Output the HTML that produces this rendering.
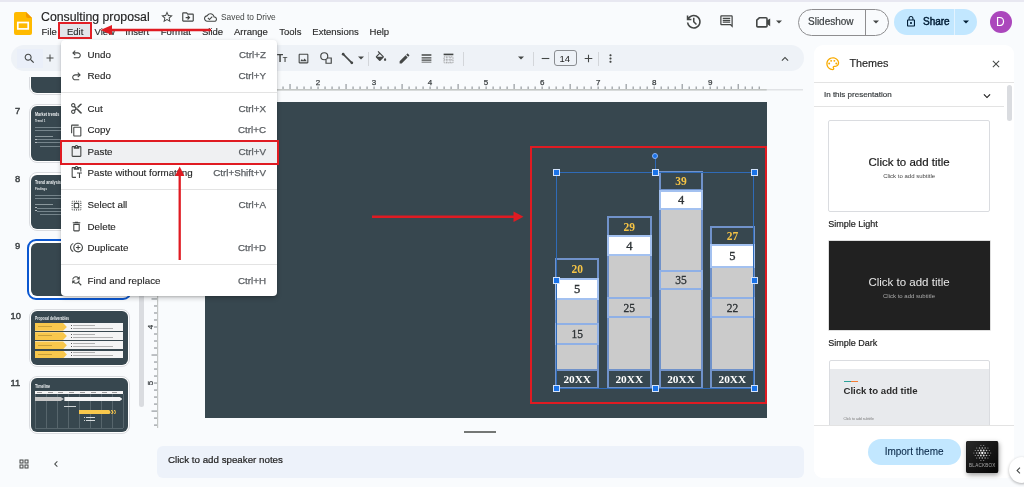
<!DOCTYPE html>
<html><head><meta charset="utf-8">
<style>
*{box-sizing:border-box;margin:0;padding:0}
html,body{width:1024px;height:487px;overflow:hidden;background:#f9fbfd;font-family:"Liberation Sans",sans-serif;color:#1f1f1f;position:relative}
.a{position:absolute}
svg{display:block}
.t{position:absolute;white-space:nowrap;line-height:1}
</style></head><body><div class="a" style="left:0;top:0;width:1024px;height:487px;will-change:transform;overflow:hidden">

<!-- filmstrip -->
<div class="a" style="left:0;top:76.8px;width:135px;height:30px;overflow:hidden"><div class="a" style="left:28.7px;top:-40.5px;width:101.5px;height:58.4px;border:1px solid #dadce0;border-radius:8px;background:#fff"></div><div class="a" style="left:30.9px;top:-38.5px;width:97px;height:54.5px;background:#37474f;border-radius:6px"></div></div>
<div class="a" style="left:28.7px;top:104.3px;width:101.5px;height:58.3px;border:1px solid #dadce0;border-radius:8px;background:#fff"></div>
<div class="a" style="left:30.9px;top:106.4px;width:97px;height:54.2px;background:#37474f;border-radius:6px;overflow:hidden"><div class="t" style="left:4px;top:4.8px;font-size:6px;font-weight:700;color:#eceff1;transform:scaleX(0.62);transform-origin:0 0">Market trends</div><div class="t" style="left:4px;top:13.5px;font-size:3.6px;font-weight:700;color:#dfe3e5;transform:scaleX(0.8);transform-origin:0 0">Trend 1</div><div class="a" style="left:4px;top:20.5px;width:40px;height:1px;background:#76858c"></div><div class="a" style="left:4px;top:23.6px;width:40px;height:1px;background:#76858c"></div><div class="a" style="left:4px;top:29.5px;width:18px;height:1px;background:#8a979c"></div><div class="a" style="left:6px;top:33.0px;width:40px;height:1px;background:#76858c"></div><div class="a" style="left:6px;top:36.1px;width:40px;height:1px;background:#76858c"></div><div class="a" style="left:9px;top:39.2px;width:37px;height:1px;background:#76858c"></div><div class="a" style="left:4.5px;top:32.7px;width:1.2px;height:1.2px;background:#c5cbce;border-radius:50%"></div><div class="a" style="left:4.5px;top:35.8px;width:1.2px;height:1.2px;background:#c5cbce;border-radius:50%"></div></div>
<div class="t" style="left:15.0px;top:106.2px;font-size:9.4px;color:#3c4043;-webkit-text-stroke:0.4px #3c4043">7</div>
<div class="a" style="left:28.7px;top:172.4px;width:101.5px;height:58.3px;border:1px solid #dadce0;border-radius:8px;background:#fff"></div>
<div class="a" style="left:30.9px;top:174.5px;width:97px;height:54.2px;background:#37474f;border-radius:6px;overflow:hidden"><div class="t" style="left:4px;top:4.8px;font-size:6px;font-weight:700;color:#eceff1;transform:scaleX(0.62);transform-origin:0 0">Trend analysis</div><div class="t" style="left:4px;top:13.5px;font-size:3.6px;font-weight:700;color:#dfe3e5;transform:scaleX(0.8);transform-origin:0 0">Findings</div><div class="a" style="left:4px;top:20.5px;width:40px;height:1px;background:#76858c"></div><div class="a" style="left:4px;top:23.6px;width:40px;height:1px;background:#76858c"></div><div class="a" style="left:4px;top:29.5px;width:18px;height:1px;background:#8a979c"></div><div class="a" style="left:6px;top:33.0px;width:40px;height:1px;background:#76858c"></div><div class="a" style="left:6px;top:36.1px;width:40px;height:1px;background:#76858c"></div><div class="a" style="left:9px;top:39.2px;width:37px;height:1px;background:#76858c"></div><div class="a" style="left:4.5px;top:32.7px;width:1.2px;height:1.2px;background:#c5cbce;border-radius:50%"></div><div class="a" style="left:4.5px;top:35.8px;width:1.2px;height:1.2px;background:#c5cbce;border-radius:50%"></div></div>
<div class="t" style="left:15.0px;top:174.3px;font-size:9.4px;color:#3c4043;-webkit-text-stroke:0.4px #3c4043">8</div>
<div class="a" style="left:27.1px;top:239.4px;width:104.5px;height:60.4px;border:2.3px solid #0b57d0;border-radius:9px;background:#fff"></div>
<div class="a" style="left:30.9px;top:242.8px;width:97px;height:53.7px;background:#37474f;border-radius:6px;overflow:hidden"></div>
<div class="t" style="left:15.0px;top:241.3px;font-size:9.4px;color:#3c4043;-webkit-text-stroke:0.4px #3c4043">9</div>
<div class="a" style="left:28.7px;top:308.6px;width:101.5px;height:58.3px;border:1px solid #dadce0;border-radius:8px;background:#fff"></div>
<div class="a" style="left:30.9px;top:310.7px;width:97px;height:54.2px;background:#37474f;border-radius:6px;overflow:hidden"><div class="t" style="left:4px;top:4.8px;font-size:6px;font-weight:700;color:#eceff1;transform:scaleX(0.55);transform-origin:0 0">Proposal deliverables</div><div class="a" style="left:4px;top:12.3px;width:88.5px;height:7.8px;background:#f4f4f4"></div><div class="a" style="left:4px;top:12.3px;width:32px;height:7.8px;background:#f8c74c;clip-path:polygon(0 0,88% 0,100% 50%,88% 100%,0 100%)"></div><div class="a" style="left:7px;top:15.5px;width:14px;height:1px;background:#c9a03a"></div><div class="a" style="left:40px;top:14.1px;width:1px;height:1px;background:#555"></div><div class="a" style="left:42.5px;top:14.1px;width:22px;height:0.8px;background:#b0b0b0"></div><div class="a" style="left:40px;top:17.1px;width:1px;height:1px;background:#555"></div><div class="a" style="left:42.5px;top:17.1px;width:40px;height:0.8px;background:#b0b0b0"></div><div class="a" style="left:4px;top:21.5px;width:88.5px;height:7.8px;background:#f4f4f4"></div><div class="a" style="left:4px;top:21.5px;width:32px;height:7.8px;background:#f8c74c;clip-path:polygon(0 0,88% 0,100% 50%,88% 100%,0 100%)"></div><div class="a" style="left:7px;top:24.7px;width:14px;height:1px;background:#c9a03a"></div><div class="a" style="left:40px;top:23.3px;width:1px;height:1px;background:#555"></div><div class="a" style="left:42.5px;top:23.3px;width:22px;height:0.8px;background:#b0b0b0"></div><div class="a" style="left:40px;top:26.3px;width:1px;height:1px;background:#555"></div><div class="a" style="left:42.5px;top:26.3px;width:40px;height:0.8px;background:#b0b0b0"></div><div class="a" style="left:4px;top:30.7px;width:88.5px;height:7.8px;background:#f4f4f4"></div><div class="a" style="left:4px;top:30.7px;width:32px;height:7.8px;background:#f8c74c;clip-path:polygon(0 0,88% 0,100% 50%,88% 100%,0 100%)"></div><div class="a" style="left:7px;top:33.9px;width:14px;height:1px;background:#c9a03a"></div><div class="a" style="left:40px;top:32.5px;width:1px;height:1px;background:#555"></div><div class="a" style="left:42.5px;top:32.5px;width:22px;height:0.8px;background:#b0b0b0"></div><div class="a" style="left:40px;top:35.5px;width:1px;height:1px;background:#555"></div><div class="a" style="left:42.5px;top:35.5px;width:40px;height:0.8px;background:#b0b0b0"></div><div class="a" style="left:4px;top:39.9px;width:88.5px;height:7.8px;background:#f4f4f4"></div><div class="a" style="left:4px;top:39.9px;width:32px;height:7.8px;background:#f8c74c;clip-path:polygon(0 0,88% 0,100% 50%,88% 100%,0 100%)"></div><div class="a" style="left:7px;top:43.1px;width:14px;height:1px;background:#c9a03a"></div><div class="a" style="left:40px;top:41.7px;width:1px;height:1px;background:#555"></div><div class="a" style="left:42.5px;top:41.7px;width:22px;height:0.8px;background:#b0b0b0"></div><div class="a" style="left:40px;top:44.7px;width:1px;height:1px;background:#555"></div><div class="a" style="left:42.5px;top:44.7px;width:40px;height:0.8px;background:#b0b0b0"></div></div>
<div class="t" style="left:10.5px;top:310.5px;font-size:9.4px;color:#3c4043;-webkit-text-stroke:0.4px #3c4043">10</div>
<div class="a" style="left:28.7px;top:376px;width:101.5px;height:58.3px;border:1px solid #dadce0;border-radius:8px;background:#fff"></div>
<div class="a" style="left:30.9px;top:378.1px;width:97px;height:54.2px;background:#37474f;border-radius:6px;overflow:hidden"><div class="t" style="left:4px;top:4.8px;font-size:6px;font-weight:700;color:#eceff1;transform:scaleX(0.62);transform-origin:0 0">Timeline</div><div class="a" style="left:4px;top:12.8px;width:88.5px;height:3.6px;background:#f4f4f4"></div><div class="a" style="left:6.0px;top:14px;width:5px;height:0.8px;background:#9a9a9a"></div><div class="a" style="left:16.8px;top:14px;width:5px;height:0.8px;background:#9a9a9a"></div><div class="a" style="left:27.6px;top:14px;width:5px;height:0.8px;background:#9a9a9a"></div><div class="a" style="left:38.4px;top:14px;width:5px;height:0.8px;background:#9a9a9a"></div><div class="a" style="left:49.2px;top:14px;width:5px;height:0.8px;background:#9a9a9a"></div><div class="a" style="left:60.0px;top:14px;width:5px;height:0.8px;background:#9a9a9a"></div><div class="a" style="left:70.8px;top:14px;width:5px;height:0.8px;background:#9a9a9a"></div><div class="a" style="left:81.6px;top:14px;width:5px;height:0.8px;background:#9a9a9a"></div><div class="a" style="left:4.0px;top:16.4px;width:0.6px;height:34px;background:#56656c"></div><div class="a" style="left:15.1px;top:16.4px;width:0.6px;height:34px;background:#56656c"></div><div class="a" style="left:26.1px;top:16.4px;width:0.6px;height:34px;background:#56656c"></div><div class="a" style="left:37.2px;top:16.4px;width:0.6px;height:34px;background:#56656c"></div><div class="a" style="left:48.2px;top:16.4px;width:0.6px;height:34px;background:#56656c"></div><div class="a" style="left:59.3px;top:16.4px;width:0.6px;height:34px;background:#56656c"></div><div class="a" style="left:70.4px;top:16.4px;width:0.6px;height:34px;background:#56656c"></div><div class="a" style="left:81.4px;top:16.4px;width:0.6px;height:34px;background:#56656c"></div><div class="a" style="left:92.5px;top:16.4px;width:0.6px;height:34px;background:#56656c"></div><div class="a" style="left:4px;top:50px;width:88.5px;height:0.6px;background:#56656c"></div><div class="a" style="left:4px;top:18.6px;width:29px;height:4.6px;background:#c8c8c8;clip-path:polygon(0 0,88% 0,100% 50%,88% 100%,0 100%)"></div><div class="a" style="left:33.5px;top:18.6px;width:58px;height:4.6px;background:#f4f4f4;clip-path:polygon(0 0,95% 0,100% 50%,95% 100%,0 100%)"></div><div class="a" style="left:33px;top:27.5px;width:12px;height:1px;background:#cfd4d6"></div><div class="a" style="left:48px;top:32px;width:37px;height:4.2px;background:#f8c74c;clip-path:polygon(0 0,82% 0,86% 50%,82% 100%,86% 100%,90% 50%,86% 0,90% 0,94% 50%,90% 100%,94% 100%,98% 50%,94% 0,98% 0,100% 50%,98% 100%,0 100%)"></div><div class="a" style="left:53px;top:38.6px;width:1.3px;height:1.3px;background:#fff;border-radius:50%"></div><div class="a" style="left:55.5px;top:38.8px;width:9px;height:1px;background:#d8dcde"></div><div class="a" style="left:53px;top:41.8px;width:1.3px;height:1.3px;background:#fff;border-radius:50%"></div><div class="a" style="left:55.5px;top:42px;width:9px;height:1px;background:#d8dcde"></div></div>
<div class="t" style="left:10.5px;top:377.9px;font-size:9.4px;color:#3c4043;-webkit-text-stroke:0.4px #3c4043">11</div>

<!-- top strip -->
<div class="a" style="left:0;top:0;width:1024px;height:2px;background:#e8e8f1"></div>

<!-- logo -->
<svg class="a" style="left:14px;top:12px" width="18" height="23" viewBox="0 0 18 23">
<path d="M2 0H12L18 6V21a2 2 0 0 1-2 2H2a2 2 0 0 1-2-2V2a2 2 0 0 1 2-2z" fill="#ffba00"/>
<path d="M12 0L18 6H14a2 2 0 0 1-2-2z" fill="#f29900"/>
<rect x="3.8" y="10.5" width="10.4" height="6.4" fill="none" stroke="#fff" stroke-width="1.7"/>
</svg>

<div class="t" style="left:41px;top:11px;font-size:12.3px;color:#1f1f1f;-webkit-text-stroke:0.15px #1f1f1f">Consulting proposal</div>

<!-- menubar -->
<div class="t" style="left:41.5px;top:27px;font-size:9.5px;color:#2b2b2b;-webkit-text-stroke:0.15px #2b2b2b">File</div>
<div class="a" style="left:59px;top:23px;width:31px;height:15px;background:#e3e5ea;border-radius:3px"></div>
<div class="t" style="left:67px;top:27px;font-size:9.5px;color:#2b2b2b;-webkit-text-stroke:0.15px #2b2b2b">Edit</div>
<div class="t" style="left:94.5px;top:27px;font-size:9.5px;color:#2b2b2b;-webkit-text-stroke:0.15px #2b2b2b">View</div>
<div class="t" style="left:125.3px;top:27px;font-size:9.5px;color:#2b2b2b;-webkit-text-stroke:0.15px #2b2b2b">Insert</div>
<div class="t" style="left:160.8px;top:27px;font-size:9.5px;color:#2b2b2b;-webkit-text-stroke:0.15px #2b2b2b">Format</div>
<div class="t" style="left:202px;top:27px;font-size:9.5px;color:#2b2b2b;-webkit-text-stroke:0.15px #2b2b2b">Slide</div>
<div class="t" style="left:234px;top:27px;font-size:9.5px;color:#2b2b2b;-webkit-text-stroke:0.15px #2b2b2b">Arrange</div>
<div class="t" style="left:279.3px;top:27px;font-size:9.5px;color:#2b2b2b;-webkit-text-stroke:0.15px #2b2b2b">Tools</div>
<div class="t" style="left:312.3px;top:27px;font-size:9.5px;color:#2b2b2b;-webkit-text-stroke:0.15px #2b2b2b">Extensions</div>
<div class="t" style="left:369.6px;top:27px;font-size:9.5px;color:#2b2b2b;-webkit-text-stroke:0.15px #2b2b2b">Help</div>

<!-- edit red box -->
<div class="a" style="left:57.5px;top:21.5px;width:34px;height:17.5px;border:2px solid #e21f26"></div>


<!-- title icons -->
<svg class="a" style="left:160px;top:10px" width="14" height="14" viewBox="0 0 24 24"><path fill="#444746" d="M22 9.24l-7.19-.62L12 2 9.19 8.63 2 9.24l5.46 4.73L5.82 21 12 17.27 18.18 21l-1.63-7.03L22 9.24zM12 15.4l-3.76 2.27 1-4.28-3.32-2.88 4.38-.38L12 6.1l1.71 4.04 4.38.38-3.32 2.88 1 4.28L12 15.4z"/></svg>
<svg class="a" style="left:181px;top:10px" width="14" height="14" viewBox="0 0 24 24"><path fill="#444746" d="M20 6h-8l-2-2H4c-1.1 0-1.99.9-1.99 2L2 18c0 1.1.9 2 2 2h16c1.1 0 2-.9 2-2V8c0-1.1-.9-2-2-2zm0 12H4V6h5.17l2 2H20v10zm-7.84-6H8v2h4.16l-1.59 1.59L11.99 17 16 13.01 11.99 9l-1.41 1.41L12.16 12z"/></svg>
<svg class="a" style="left:203.5px;top:11px" width="13" height="13" viewBox="0 0 24 24"><path fill="#444746" d="M19.35 10.04C18.67 6.59 15.64 4 12 4 9.11 4 6.6 5.640 5.35 8.04 2.34 8.36 0 10.91 0 14c0 3.31 2.69 6 6 6h13c2.76 0 5-2.24 5-5 0-2.64-2.05-4.780-4.65-4.96zM19 18H6c-2.21 0-4-1.79-4-4 0-2.05 1.53-3.76 3.56-3.97l1.07-.11.5-.95C8.08 7.14 9.94 6 12 6c2.62 0 4.88 1.86 5.39 4.43l.3 1.5 1.53.11c1.56.1 2.78 1.41 2.78 2.96 0 1.65-1.35 3-3 3zm-9-3.82l-2.09-2.09L6.5 13.5 10 17l6.01-6.01-1.41-1.41z"/></svg>
<div class="t" style="left:221px;top:13px;font-size:8.35px;color:#444746">Saved to Drive</div>

<!-- right header -->
<svg class="a" style="left:685.8px;top:14px" width="15.5" height="15.5" viewBox="80 -880 800 800"><path fill="#444746" d="M480-120q-138 0-240.5-91.5T122-440h82q14 104 92.5 172T480-200q117 0 198.5-81.5T760-480q0-117-81.5-198.5T480-760q-69 0-129 32t-101 88h110v80H120v-240h80v94q51-64 124.5-99T480-840q75 0 140.5 28.5t114 77q48.5 48.5 77 114T840-480q0 75-28.5 140.5t-77 114q-48.5 48.5-114 77T480-120Zm112-192L440-464v-216h80v184l128 128-56 56Z"/></svg>
<svg class="a" style="left:719px;top:14px" width="15" height="15" viewBox="0 0 24 24"><path fill="#444746" d="M21.99 4c0-1.1-.89-2-1.99-2H4c-1.1 0-2 .9-2 2v12c0 1.1.9 2 2 2h14l4 4-.01-18zM20 4v13.17L18.83 16H4V4h16zM6 12h12v2H6zm0-3h12v2H6zm0-3h12v2H6z"/></svg>
<svg class="a" style="left:754px;top:15px" width="18" height="14" viewBox="0 0 18 14"><path fill="none" stroke="#444746" stroke-width="1.6" stroke-linejoin="round" d="M2.8 5.2L5.3 2.8H12a1 1 0 0 1 1 1V10.9a1 1 0 0 1-1 1H3.8a1 1 0 0 1-1-1z"/><path fill="#444746" d="M13 5.6L16.2 3.4V11.3L13 9.1z"/></svg>
<svg class="a" style="left:775px;top:18px" width="8" height="8" viewBox="0 0 8 8"><path fill="#444746" d="M1 2.5h6L4 5.5z"/></svg>

<div class="a" style="left:797.5px;top:8.5px;width:91px;height:27px;border:1px solid #8e8e90;border-radius:14px"></div>
<div class="a" style="left:865px;top:9px;width:1px;height:26px;background:#8e8e90"></div>
<div class="t" style="left:808px;top:17px;font-size:10px;color:#3c4043;-webkit-text-stroke:0.2px #3c4043">Slideshow</div>
<svg class="a" style="left:871.5px;top:18px" width="8" height="8" viewBox="0 0 8 8"><path fill="#444746" d="M1 2.5h6L4 5.5z"/></svg>

<div class="a" style="left:894px;top:8.5px;width:83px;height:26.5px;background:#c2e7ff;border-radius:14px"></div>
<div class="a" style="left:954px;top:8.5px;width:1px;height:26.5px;background:#e3f3ff"></div>
<svg class="a" style="left:905px;top:15px" width="12" height="13" viewBox="0 0 24 26"><path fill="#001d35" d="M18 9h-1V7c0-2.76-2.24-5-5-5S7 4.24 7 7v2H6c-1.1 0-2 .9-2 2v10c0 1.1.9 2 2 2h12c1.1 0 2-.9 2-2V11c0-1.1-.9-2-2-2zM9.2 7c0-1.55 1.250-2.8 2.8-2.8s2.8 1.25 2.8 2.8v2H9.2V7zM17.8 20.8H6.2V11.2h11.6zM12 18c1.1 0 2-.9 2-2s-.9-2-2-2-2 .9-2 2 .9 2 2 2z"/></svg>
<div class="t" style="left:923px;top:17px;font-size:10px;color:#001d35;-webkit-text-stroke:0.45px #001d35">Share</div>
<svg class="a" style="left:962px;top:18px" width="8" height="8" viewBox="0 0 8 8"><path fill="#001d35" d="M1 2.5h6L4 5.5z"/></svg>

<div class="a" style="left:990px;top:10.8px;width:22px;height:22px;border-radius:50%;background:#ab47bc"></div>
<div class="t" style="left:996px;top:16px;font-size:12px;color:#fff">D</div>


<!-- toolbar -->
<div class="a" style="left:11px;top:45px;width:793px;height:26px;background:#eef2f7;border-radius:13px"></div>
<div class="a" style="left:16.5px;top:48.5px;width:26px;height:19.5px;background:#eaeff9"></div>
<svg class="a" style="left:22.5px;top:51.5px" width="13" height="13" viewBox="0 0 24 24"><path fill="#444746" d="M15.5 14h-.79l-.28-.27C15.41 12.59 16 11.110 16 9.5 16 5.91 13.09 3 9.5 3S3 5.91 3 9.5 5.91 16 9.5 16c1.61 0 3.09-.59 4.23-1.57l.27.28v.79l5 4.99L20.49 19l-4.99-5zm-6 0C7.01 14 5 11.99 5 9.5S7.01 5 9.5 5 14 7.01 14 9.5 11.99 14 9.5 14z"/></svg>
<svg class="a" style="left:44px;top:52px" width="12" height="12" viewBox="0 0 24 24"><path fill="#444746" d="M19 13h-6v6h-2v-6H5v-2h6V5h2v6h6v2z"/></svg>
<div class="t" style="left:277px;top:54px;font-size:10px;font-weight:700;color:#444746;letter-spacing:-0.3px">T<span style="font-size:7.5px">T</span></div>
<svg class="a" style="left:297px;top:52px" width="13" height="13" viewBox="0 0 24 24"><path fill="#444746" d="M19 5v14H5V5h14m0-2H5c-1.1 0-2 .9-2 2v14c0 1.1.9 2 2 2h14c1.1 0 2-.9 2-2V5c0-1.1-.9-2-2-2zm-4.86 8.86l-3 3.87L9 13.14 6 17h12l-3.86-5.14z"/></svg>
<svg class="a" style="left:319px;top:51px" width="14" height="14" viewBox="0 0 24 24"><circle cx="9" cy="9" r="6" fill="none" stroke="#444746" stroke-width="2"/><path d="M15.2 12H21v9h-9v-5.5" fill="none" stroke="#444746" stroke-width="2"/></svg>
<svg class="a" style="left:341px;top:52px" width="13" height="13" viewBox="0 0 24 24"><path d="M4 4L20 20" stroke="#444746" stroke-width="3"/><circle cx="4" cy="4" r="2.5" fill="#444746"/><circle cx="20" cy="20" r="2.5" fill="#444746"/></svg>
<svg class="a" style="left:357px;top:54px" width="8" height="8" viewBox="0 0 8 8"><path fill="#444746" d="M1 2.5h6L4 5.5z"/></svg>
<div class="a" style="left:368px;top:52px;width:1px;height:14px;background:#d3d6da"></div>
<svg class="a" style="left:374px;top:51px" width="14" height="14" viewBox="0 0 24 24"><path fill="#444746" d="M16.56 8.94L7.62 0 6.21 1.41l2.38 2.38-5.15 5.15c-.59.59-.59 1.54 0 2.12l5.5 5.5c.29.29.68.44 1.060.44s.77-.15 1.06-.44l5.5-5.5c.59-.58.59-1.53 0-2.12zM5.21 10L10 5.21 14.79 10H5.21zM19 11.5s-2 2.17-2 3.5c0 1.1.9 2 2 2s2-.9 2-2c0-1.33-2-3.5-2-3.5z"/></svg>
<svg class="a" style="left:398px;top:52px" width="13" height="13" viewBox="0 0 24 24"><path fill="#444746" d="M3 17.25V21h3.75L17.81 9.94l-3.75-3.75L3 17.25zM20.71 7.04c.39-.39.39-1.02 0-1.41l-2.34-2.34c-.39-.39-1.02-.39-1.41 0l-1.83 1.83 3.75 3.75 1.83-1.83z"/></svg>
<svg class="a" style="left:420px;top:52px" width="13" height="13" viewBox="0 0 24 24"><path fill="#444746" d="M3 4h18v3H3zM3 9.5h18v2.5H3zM3 14h18v2H3zM3 18h18v1.5H3z"/></svg>
<svg class="a" style="left:442px;top:52px" width="13" height="13" viewBox="0 0 24 24"><path fill="#444746" d="M3 3h18v3H3z"/><path fill="none" stroke="#8a8a8a" stroke-width="1.4" d="M3.7 9h16.6v11H3.7zM3.7 14.5h16.6M9 9v11M15 9v11" stroke-dasharray="2 1.2"/></svg>
<div class="a" style="left:463px;top:52px;width:1px;height:14px;background:#d3d6da"></div>
<svg class="a" style="left:517px;top:54px" width="8" height="8" viewBox="0 0 8 8"><path fill="#444746" d="M1 2.5h6L4 5.5z"/></svg>
<div class="a" style="left:533px;top:52px;width:1px;height:14px;background:#d3d6da"></div>
<svg class="a" style="left:539px;top:52px" width="13" height="13" viewBox="0 0 24 24"><path fill="#444746" d="M19 13H5v-2h14v2z"/></svg>
<div class="a" style="left:554px;top:50px;width:23px;height:16px;border:1px solid #8a8d91;border-radius:3px"></div>
<div class="t" style="left:559.5px;top:54px;font-size:9.5px;color:#1f1f1f">14</div>
<svg class="a" style="left:581.5px;top:52px" width="13" height="13" viewBox="0 0 24 24"><path fill="#444746" d="M19 13h-6v6h-2v-6H5v-2h6V5h2v6h6v2z"/></svg>
<div class="a" style="left:597.5px;top:52px;width:1px;height:14px;background:#d3d6da"></div>
<svg class="a" style="left:604px;top:52px" width="13" height="13" viewBox="0 0 24 24"><path fill="#444746" d="M12 8c1.1 0 2-.9 2-2s-.9-2-2-2-2 .9-2 2 .9 2 2 2zm0 2c-1.1 0-2 .9-2 2s.9 2 2 2 2-.9 2-2-.9-2-2-2zm0 6c-1.1 0-2 .9-2 2s.9 2 2 2 2-.9 2-2-.9-2-2-2z"/></svg>
<svg class="a" style="left:778px;top:51.5px" width="14" height="14" viewBox="0 0 24 24"><path fill="#444746" d="M12 8l-6 6 1.41 1.41L12 10.83l4.59 4.58L18 14z"/></svg>
<svg class="a" style="left:0;top:74px" width="1024" height="20" viewBox="0 74 1024 20">
<rect x="160" y="89" width="643" height="1.5" fill="#e1e3e6"/>
<rect x="205.3" y="89" width="561.4" height="1.5" fill="#c4c7c5"/>
<rect x="205.50" y="86.5" width="1" height="2.5" fill="#80868b"/><rect x="212.50" y="86.5" width="1" height="2.5" fill="#80868b"/><rect x="219.50" y="86.5" width="1" height="2.5" fill="#80868b"/><rect x="226.51" y="86.5" width="1" height="2.5" fill="#80868b"/><rect x="233.51" y="84" width="1" height="5" fill="#80868b"/><rect x="240.51" y="86.5" width="1" height="2.5" fill="#80868b"/><rect x="247.51" y="86.5" width="1" height="2.5" fill="#80868b"/><rect x="254.52" y="86.5" width="1" height="2.5" fill="#80868b"/><rect x="261.52" y="86.5" width="1" height="2.5" fill="#80868b"/><rect x="268.52" y="86.5" width="1" height="2.5" fill="#80868b"/><rect x="275.52" y="86.5" width="1" height="2.5" fill="#80868b"/><rect x="282.53" y="86.5" width="1" height="2.5" fill="#80868b"/><rect x="289.53" y="84" width="1" height="5" fill="#80868b"/><rect x="296.53" y="86.5" width="1" height="2.5" fill="#80868b"/><rect x="303.54" y="86.5" width="1" height="2.5" fill="#80868b"/><rect x="310.54" y="86.5" width="1" height="2.5" fill="#80868b"/><rect x="317.54" y="86.5" width="1" height="2.5" fill="#80868b"/><rect x="324.54" y="86.5" width="1" height="2.5" fill="#80868b"/><rect x="331.55" y="86.5" width="1" height="2.5" fill="#80868b"/><rect x="338.55" y="86.5" width="1" height="2.5" fill="#80868b"/><rect x="345.55" y="84" width="1" height="5" fill="#80868b"/><rect x="352.55" y="86.5" width="1" height="2.5" fill="#80868b"/><rect x="359.56" y="86.5" width="1" height="2.5" fill="#80868b"/><rect x="366.56" y="86.5" width="1" height="2.5" fill="#80868b"/><rect x="373.56" y="86.5" width="1" height="2.5" fill="#80868b"/><rect x="380.56" y="86.5" width="1" height="2.5" fill="#80868b"/><rect x="387.56" y="86.5" width="1" height="2.5" fill="#80868b"/><rect x="394.57" y="86.5" width="1" height="2.5" fill="#80868b"/><rect x="401.57" y="84" width="1" height="5" fill="#80868b"/><rect x="408.57" y="86.5" width="1" height="2.5" fill="#80868b"/><rect x="415.58" y="86.5" width="1" height="2.5" fill="#80868b"/><rect x="422.58" y="86.5" width="1" height="2.5" fill="#80868b"/><rect x="429.58" y="86.5" width="1" height="2.5" fill="#80868b"/><rect x="436.58" y="86.5" width="1" height="2.5" fill="#80868b"/><rect x="443.59" y="86.5" width="1" height="2.5" fill="#80868b"/><rect x="450.59" y="86.5" width="1" height="2.5" fill="#80868b"/><rect x="457.59" y="84" width="1" height="5" fill="#80868b"/><rect x="464.59" y="86.5" width="1" height="2.5" fill="#80868b"/><rect x="471.60" y="86.5" width="1" height="2.5" fill="#80868b"/><rect x="478.60" y="86.5" width="1" height="2.5" fill="#80868b"/><rect x="485.60" y="86.5" width="1" height="2.5" fill="#80868b"/><rect x="492.60" y="86.5" width="1" height="2.5" fill="#80868b"/><rect x="499.61" y="86.5" width="1" height="2.5" fill="#80868b"/><rect x="506.61" y="86.5" width="1" height="2.5" fill="#80868b"/><rect x="513.61" y="84" width="1" height="5" fill="#80868b"/><rect x="520.61" y="86.5" width="1" height="2.5" fill="#80868b"/><rect x="527.62" y="86.5" width="1" height="2.5" fill="#80868b"/><rect x="534.62" y="86.5" width="1" height="2.5" fill="#80868b"/><rect x="541.62" y="86.5" width="1" height="2.5" fill="#80868b"/><rect x="548.62" y="86.5" width="1" height="2.5" fill="#80868b"/><rect x="555.62" y="86.5" width="1" height="2.5" fill="#80868b"/><rect x="562.63" y="86.5" width="1" height="2.5" fill="#80868b"/><rect x="569.63" y="84" width="1" height="5" fill="#80868b"/><rect x="576.63" y="86.5" width="1" height="2.5" fill="#80868b"/><rect x="583.63" y="86.5" width="1" height="2.5" fill="#80868b"/><rect x="590.64" y="86.5" width="1" height="2.5" fill="#80868b"/><rect x="597.64" y="86.5" width="1" height="2.5" fill="#80868b"/><rect x="604.64" y="86.5" width="1" height="2.5" fill="#80868b"/><rect x="611.64" y="86.5" width="1" height="2.5" fill="#80868b"/><rect x="618.65" y="86.5" width="1" height="2.5" fill="#80868b"/><rect x="625.65" y="84" width="1" height="5" fill="#80868b"/><rect x="632.65" y="86.5" width="1" height="2.5" fill="#80868b"/><rect x="639.65" y="86.5" width="1" height="2.5" fill="#80868b"/><rect x="646.66" y="86.5" width="1" height="2.5" fill="#80868b"/><rect x="653.66" y="86.5" width="1" height="2.5" fill="#80868b"/><rect x="660.66" y="86.5" width="1" height="2.5" fill="#80868b"/><rect x="667.66" y="86.5" width="1" height="2.5" fill="#80868b"/><rect x="674.67" y="86.5" width="1" height="2.5" fill="#80868b"/><rect x="681.67" y="84" width="1" height="5" fill="#80868b"/><rect x="688.67" y="86.5" width="1" height="2.5" fill="#80868b"/><rect x="695.67" y="86.5" width="1" height="2.5" fill="#80868b"/><rect x="702.68" y="86.5" width="1" height="2.5" fill="#80868b"/><rect x="709.68" y="86.5" width="1" height="2.5" fill="#80868b"/><rect x="716.68" y="86.5" width="1" height="2.5" fill="#80868b"/><rect x="723.69" y="86.5" width="1" height="2.5" fill="#80868b"/><rect x="730.69" y="86.5" width="1" height="2.5" fill="#80868b"/><rect x="737.69" y="84" width="1" height="5" fill="#80868b"/><rect x="744.69" y="86.5" width="1" height="2.5" fill="#80868b"/><rect x="751.70" y="86.5" width="1" height="2.5" fill="#80868b"/><rect x="758.70" y="86.5" width="1" height="2.5" fill="#80868b"/>
<text x="262.02" y="85.2" font-family="Liberation Sans" font-size="8" fill="#3c4043" stroke="#3c4043" stroke-width="0.25" text-anchor="middle">1</text>
<text x="318.04" y="85.2" font-family="Liberation Sans" font-size="8" fill="#3c4043" stroke="#3c4043" stroke-width="0.25" text-anchor="middle">2</text>
<text x="374.06" y="85.2" font-family="Liberation Sans" font-size="8" fill="#3c4043" stroke="#3c4043" stroke-width="0.25" text-anchor="middle">3</text>
<text x="430.08" y="85.2" font-family="Liberation Sans" font-size="8" fill="#3c4043" stroke="#3c4043" stroke-width="0.25" text-anchor="middle">4</text>
<text x="486.10" y="85.2" font-family="Liberation Sans" font-size="8" fill="#3c4043" stroke="#3c4043" stroke-width="0.25" text-anchor="middle">5</text>
<text x="542.12" y="85.2" font-family="Liberation Sans" font-size="8" fill="#3c4043" stroke="#3c4043" stroke-width="0.25" text-anchor="middle">6</text>
<text x="598.14" y="85.2" font-family="Liberation Sans" font-size="8" fill="#3c4043" stroke="#3c4043" stroke-width="0.25" text-anchor="middle">7</text>
<text x="654.16" y="85.2" font-family="Liberation Sans" font-size="8" fill="#3c4043" stroke="#3c4043" stroke-width="0.25" text-anchor="middle">8</text>
<text x="710.18" y="85.2" font-family="Liberation Sans" font-size="8" fill="#3c4043" stroke="#3c4043" stroke-width="0.25" text-anchor="middle">9</text>
</svg>
<svg class="a" style="left:140px;top:90px" width="20" height="340" viewBox="140 90 20 340">
<rect x="157" y="92" width="1.2" height="336" fill="#c4c7c5"/>
<rect x="154" y="102.30" width="3" height="1" fill="#80868b"/>
<rect x="154" y="109.31" width="3" height="1" fill="#80868b"/>
<rect x="154" y="116.31" width="3" height="1" fill="#80868b"/>
<rect x="154" y="123.32" width="3" height="1" fill="#80868b"/>
<rect x="151.5" y="130.32" width="5.5" height="1" fill="#80868b"/>
<rect x="154" y="137.33" width="3" height="1" fill="#80868b"/>
<rect x="154" y="144.34" width="3" height="1" fill="#80868b"/>
<rect x="154" y="151.34" width="3" height="1" fill="#80868b"/>
<rect x="154" y="158.35" width="3" height="1" fill="#80868b"/>
<rect x="154" y="165.36" width="3" height="1" fill="#80868b"/>
<rect x="154" y="172.36" width="3" height="1" fill="#80868b"/>
<rect x="154" y="179.37" width="3" height="1" fill="#80868b"/>
<rect x="151.5" y="186.38" width="5.5" height="1" fill="#80868b"/>
<rect x="154" y="193.38" width="3" height="1" fill="#80868b"/>
<rect x="154" y="200.39" width="3" height="1" fill="#80868b"/>
<rect x="154" y="207.39" width="3" height="1" fill="#80868b"/>
<rect x="154" y="214.40" width="3" height="1" fill="#80868b"/>
<rect x="154" y="221.41" width="3" height="1" fill="#80868b"/>
<rect x="154" y="228.41" width="3" height="1" fill="#80868b"/>
<rect x="154" y="235.42" width="3" height="1" fill="#80868b"/>
<rect x="151.5" y="242.43" width="5.5" height="1" fill="#80868b"/>
<rect x="154" y="249.43" width="3" height="1" fill="#80868b"/>
<rect x="154" y="256.44" width="3" height="1" fill="#80868b"/>
<rect x="154" y="263.44" width="3" height="1" fill="#80868b"/>
<rect x="154" y="270.45" width="3" height="1" fill="#80868b"/>
<rect x="154" y="277.46" width="3" height="1" fill="#80868b"/>
<rect x="154" y="284.46" width="3" height="1" fill="#80868b"/>
<rect x="154" y="291.47" width="3" height="1" fill="#80868b"/>
<rect x="151.5" y="298.47" width="5.5" height="1" fill="#80868b"/>
<rect x="154" y="305.48" width="3" height="1" fill="#80868b"/>
<rect x="154" y="312.49" width="3" height="1" fill="#80868b"/>
<rect x="154" y="319.49" width="3" height="1" fill="#80868b"/>
<rect x="154" y="326.50" width="3" height="1" fill="#80868b"/>
<rect x="154" y="333.51" width="3" height="1" fill="#80868b"/>
<rect x="154" y="340.51" width="3" height="1" fill="#80868b"/>
<rect x="154" y="347.52" width="3" height="1" fill="#80868b"/>
<rect x="151.5" y="354.52" width="5.5" height="1" fill="#80868b"/>
<rect x="154" y="361.53" width="3" height="1" fill="#80868b"/>
<rect x="154" y="368.54" width="3" height="1" fill="#80868b"/>
<rect x="154" y="375.54" width="3" height="1" fill="#80868b"/>
<rect x="154" y="382.55" width="3" height="1" fill="#80868b"/>
<rect x="154" y="389.56" width="3" height="1" fill="#80868b"/>
<rect x="154" y="396.56" width="3" height="1" fill="#80868b"/>
<rect x="154" y="403.57" width="3" height="1" fill="#80868b"/>
<rect x="151.5" y="410.57" width="5.5" height="1" fill="#80868b"/>
<rect x="154" y="417.58" width="3" height="1" fill="#80868b"/>
<rect x="154" y="424.59" width="3" height="1" fill="#80868b"/>
<text x="0" y="0" transform="translate(152.6 158.85) rotate(-90)" font-family="Liberation Sans" font-size="8" fill="#3c4043" stroke="#3c4043" stroke-width="0.25" text-anchor="middle">1</text>
<text x="0" y="0" transform="translate(152.6 214.90) rotate(-90)" font-family="Liberation Sans" font-size="8" fill="#3c4043" stroke="#3c4043" stroke-width="0.25" text-anchor="middle">2</text>
<text x="0" y="0" transform="translate(152.6 270.95) rotate(-90)" font-family="Liberation Sans" font-size="8" fill="#3c4043" stroke="#3c4043" stroke-width="0.25" text-anchor="middle">3</text>
<text x="0" y="0" transform="translate(152.6 327.00) rotate(-90)" font-family="Liberation Sans" font-size="8" fill="#3c4043" stroke="#3c4043" stroke-width="0.25" text-anchor="middle">4</text>
<text x="0" y="0" transform="translate(152.6 383.05) rotate(-90)" font-family="Liberation Sans" font-size="8" fill="#3c4043" stroke="#3c4043" stroke-width="0.25" text-anchor="middle">5</text>
</svg>
<div class="a" style="left:138.5px;top:96px;width:5.5px;height:311px;background:#dadce0;border-radius:3px"></div>
<div class="a" style="left:205.3px;top:102px;width:561.4px;height:315.7px;background:#37474f"></div>
<div class="a" style="left:464px;top:431px;width:32px;height:1.5px;background:#747775"></div>
<div class="a" style="left:157px;top:446px;width:646.5px;height:31.5px;background:#edf2fa;border-radius:6px"></div>
<div class="t" style="left:168px;top:455px;font-size:9.75px;color:#1f1f1f;-webkit-text-stroke:0.2px #1f1f1f">Click to add speaker notes</div>
<svg class="a" style="left:18px;top:458px" width="12" height="12" viewBox="0 0 24 24"><path fill="#444746" d="M3 3v8h8V3H3zm6 6H5V5h4v4zm-6 4v8h8v-8H3zm6 6H5v-4h4v4zm4-16v8h8V3h-8zm6 6h-4V5h4v4zm-6 4v8h8v-8h-8zm6 6h-4v-4h4v4z"/></svg>
<svg class="a" style="left:50px;top:458px" width="12" height="12" viewBox="0 0 24 24"><path fill="#444746" d="M15.41 7.41L14 6l-6 6 6 6 1.41-1.41L10.83 12z"/></svg>


<!-- chart -->
<div class="a" style="left:555.1px;top:258.2px;width:44.2px;height:130.8px;background:#7092ca"></div>
<div class="a" style="left:555.1px;top:278.0px;width:44.2px;height:21.5px;background:#a3c1f0"></div>
<div class="a" style="left:555.1px;top:323.0px;width:44.2px;height:22.0px;background:#8fb0e6"></div>
<div class="a" style="left:557.1px;top:260.2px;width:40.2px;height:17.8px;background:#37474f"></div>
<div class="a" style="left:555.1px;top:261.1px;width:44.2px;height:16px;line-height:16px;text-align:center;white-space:nowrap;font-family:'Liberation Serif';font-weight:700;font-size:11.5px;color:#f6c445">20</div>
<div class="a" style="left:557.1px;top:280px;width:40.2px;height:17.5px;background:#ffffff"></div>
<div class="a" style="left:555.1px;top:280.8px;width:44.2px;height:16px;line-height:16px;text-align:center;white-space:nowrap;font-family:'Liberation Serif';font-size:12.5px;color:#2e3336;-webkit-text-stroke:0.35px #2e3336">5</div>
<div class="a" style="left:557.1px;top:299.5px;width:40.2px;height:23.5px;background:#cbcbcb"></div>
<div class="a" style="left:557.1px;top:325px;width:40.2px;height:18.0px;background:#cbcbcb"></div>
<div class="a" style="left:555.1px;top:326.0px;width:44.2px;height:16px;line-height:16px;text-align:center;white-space:nowrap;font-family:'Liberation Serif';font-size:11.5px;color:#2e3336;-webkit-text-stroke:0.3px #2e3336">15</div>
<div class="a" style="left:557.1px;top:345px;width:40.2px;height:23.8px;background:#cbcbcb"></div>
<div class="a" style="left:557.1px;top:371px;width:40.2px;height:16.0px;background:#37474f"></div>
<div class="a" style="left:555.1px;top:371.0px;width:44.2px;height:16px;line-height:16px;text-align:center;white-space:nowrap;font-family:'Liberation Serif';font-weight:700;font-size:11.3px;color:#ffffff">20XX</div>
<div class="a" style="left:606.9px;top:216.2px;width:44.8px;height:172.8px;background:#7092ca"></div>
<div class="a" style="left:606.9px;top:235.1px;width:44.8px;height:21.2px;background:#a3c1f0"></div>
<div class="a" style="left:606.9px;top:296.7px;width:44.8px;height:21.7px;background:#8fb0e6"></div>
<div class="a" style="left:608.9px;top:218.2px;width:40.8px;height:16.9px;background:#37474f"></div>
<div class="a" style="left:606.9px;top:218.6px;width:44.8px;height:16px;line-height:16px;text-align:center;white-space:nowrap;font-family:'Liberation Serif';font-weight:700;font-size:11.5px;color:#f6c445">29</div>
<div class="a" style="left:608.9px;top:237.1px;width:40.8px;height:17.2px;background:#ffffff"></div>
<div class="a" style="left:606.9px;top:237.7px;width:44.8px;height:16px;line-height:16px;text-align:center;white-space:nowrap;font-family:'Liberation Serif';font-size:12.5px;color:#2e3336;-webkit-text-stroke:0.35px #2e3336">4</div>
<div class="a" style="left:608.9px;top:256.3px;width:40.8px;height:40.4px;background:#cbcbcb"></div>
<div class="a" style="left:608.9px;top:298.7px;width:40.8px;height:17.7px;background:#cbcbcb"></div>
<div class="a" style="left:606.9px;top:299.5px;width:44.8px;height:16px;line-height:16px;text-align:center;white-space:nowrap;font-family:'Liberation Serif';font-size:11.5px;color:#2e3336;-webkit-text-stroke:0.3px #2e3336">25</div>
<div class="a" style="left:608.9px;top:318.4px;width:40.8px;height:50.4px;background:#cbcbcb"></div>
<div class="a" style="left:608.9px;top:371px;width:40.8px;height:16.0px;background:#37474f"></div>
<div class="a" style="left:606.9px;top:371.0px;width:44.8px;height:16px;line-height:16px;text-align:center;white-space:nowrap;font-family:'Liberation Serif';font-weight:700;font-size:11.3px;color:#ffffff">20XX</div>
<div class="a" style="left:658.7px;top:171.2px;width:44.7px;height:217.8px;background:#7092ca"></div>
<div class="a" style="left:658.7px;top:189.5px;width:44.7px;height:20.7px;background:#a3c1f0"></div>
<div class="a" style="left:658.7px;top:270.4px;width:44.7px;height:19.6px;background:#8fb0e6"></div>
<div class="a" style="left:660.7px;top:173.2px;width:40.7px;height:16.3px;background:#37474f"></div>
<div class="a" style="left:658.7px;top:173.3px;width:44.7px;height:16px;line-height:16px;text-align:center;white-space:nowrap;font-family:'Liberation Serif';font-weight:700;font-size:11.5px;color:#f6c445">39</div>
<div class="a" style="left:660.7px;top:191.5px;width:40.7px;height:16.7px;background:#ffffff"></div>
<div class="a" style="left:658.7px;top:191.8px;width:44.7px;height:16px;line-height:16px;text-align:center;white-space:nowrap;font-family:'Liberation Serif';font-size:12.5px;color:#2e3336;-webkit-text-stroke:0.35px #2e3336">4</div>
<div class="a" style="left:660.7px;top:210.2px;width:40.7px;height:60.2px;background:#cbcbcb"></div>
<div class="a" style="left:660.7px;top:272.4px;width:40.7px;height:15.6px;background:#cbcbcb"></div>
<div class="a" style="left:658.7px;top:272.2px;width:44.7px;height:16px;line-height:16px;text-align:center;white-space:nowrap;font-family:'Liberation Serif';font-size:11.5px;color:#2e3336;-webkit-text-stroke:0.3px #2e3336">35</div>
<div class="a" style="left:660.7px;top:290px;width:40.7px;height:78.8px;background:#cbcbcb"></div>
<div class="a" style="left:660.7px;top:371px;width:40.7px;height:16.0px;background:#37474f"></div>
<div class="a" style="left:658.7px;top:371.0px;width:44.7px;height:16px;line-height:16px;text-align:center;white-space:nowrap;font-family:'Liberation Serif';font-weight:700;font-size:11.3px;color:#ffffff">20XX</div>
<div class="a" style="left:710.2px;top:225.5px;width:44.4px;height:163.5px;background:#7092ca"></div>
<div class="a" style="left:710.2px;top:244.3px;width:44.4px;height:23.5px;background:#a3c1f0"></div>
<div class="a" style="left:710.2px;top:297.4px;width:44.4px;height:20.7px;background:#8fb0e6"></div>
<div class="a" style="left:712.2px;top:227.5px;width:40.4px;height:16.8px;background:#37474f"></div>
<div class="a" style="left:710.2px;top:227.9px;width:44.4px;height:16px;line-height:16px;text-align:center;white-space:nowrap;font-family:'Liberation Serif';font-weight:700;font-size:11.5px;color:#f6c445">27</div>
<div class="a" style="left:712.2px;top:246.3px;width:40.4px;height:19.5px;background:#ffffff"></div>
<div class="a" style="left:710.2px;top:248.1px;width:44.4px;height:16px;line-height:16px;text-align:center;white-space:nowrap;font-family:'Liberation Serif';font-size:12.5px;color:#2e3336;-webkit-text-stroke:0.35px #2e3336">5</div>
<div class="a" style="left:712.2px;top:267.8px;width:40.4px;height:29.6px;background:#cbcbcb"></div>
<div class="a" style="left:712.2px;top:299.4px;width:40.4px;height:16.7px;background:#cbcbcb"></div>
<div class="a" style="left:710.2px;top:299.8px;width:44.4px;height:16px;line-height:16px;text-align:center;white-space:nowrap;font-family:'Liberation Serif';font-size:11.5px;color:#2e3336;-webkit-text-stroke:0.3px #2e3336">22</div>
<div class="a" style="left:712.2px;top:318.1px;width:40.4px;height:50.7px;background:#cbcbcb"></div>
<div class="a" style="left:712.2px;top:371px;width:40.4px;height:16.0px;background:#37474f"></div>
<div class="a" style="left:710.2px;top:371.0px;width:44.4px;height:16px;line-height:16px;text-align:center;white-space:nowrap;font-family:'Liberation Serif';font-weight:700;font-size:11.3px;color:#ffffff">20XX</div>
<!-- selection box -->
<div class="a" style="left:555.8px;top:171.6px;width:198.6px;height:217px;border:1px solid #2f6bb8"></div>
<div class="a" style="left:654.6px;top:156px;width:1px;height:16px;background:#2f6bb8"></div>
<div class="a" style="left:652px;top:153px;width:6px;height:6px;border-radius:50%;background:#1a73e8;border:1px solid #8ab4f8"></div>
<div class="a" style="left:553.2px;top:169.0px;width:6.5px;height:6.5px;background:#1a73e8;border:1px solid #d2e3fc"></div>
<div class="a" style="left:652.0px;top:169.0px;width:6.5px;height:6.5px;background:#1a73e8;border:1px solid #d2e3fc"></div>
<div class="a" style="left:751.0px;top:169.0px;width:6.5px;height:6.5px;background:#1a73e8;border:1px solid #d2e3fc"></div>
<div class="a" style="left:553.2px;top:277.0px;width:6.5px;height:6.5px;background:#1a73e8;border:1px solid #d2e3fc"></div>
<div class="a" style="left:751.0px;top:277.0px;width:6.5px;height:6.5px;background:#1a73e8;border:1px solid #d2e3fc"></div>
<div class="a" style="left:553.2px;top:385.2px;width:6.5px;height:6.5px;background:#1a73e8;border:1px solid #d2e3fc"></div>
<div class="a" style="left:652.0px;top:385.2px;width:6.5px;height:6.5px;background:#1a73e8;border:1px solid #d2e3fc"></div>
<div class="a" style="left:751.0px;top:385.2px;width:6.5px;height:6.5px;background:#1a73e8;border:1px solid #d2e3fc"></div>
<div class="a" style="left:530.2px;top:146.3px;width:236.6px;height:257.5px;border:2.3px solid #e01b22"></div>
<svg class="a" style="left:360px;top:200px" width="180" height="30" viewBox="360 200 180 30"><path d="M372 216.8H515" stroke="#e01b22" stroke-width="2.5"/><path d="M513.5 211.6L523.5 216.8L513.5 222z" fill="#e01b22"/></svg>


<!-- themes panel -->
<div class="a" style="left:814.2px;top:45px;width:200px;height:433px;background:#fff;border-radius:9px"></div>
<svg class="a" style="left:825px;top:56px" width="15.5" height="15.5" viewBox="0 0 24 24"><path fill="#f9ab00" d="M12 22C6.49 22 2 17.51 2 12S6.49 2 12 2s10 4.04 10 9c0 3.31-2.69 6-6 6h-1.77c-.28 0-.5.22-.5.5 0 .12.05.23.13.33.41.47.64 1.06.64 1.67 0 1.38-1.12 2.5-2.5 2.5zm0-18c-4.41 0-8 3.59-8 8s3.59 8 8 8c.28 0 .5-.22.5-.5 0-.16-.08-.28-.14-.35-.41-.46-.63-1.05-.63-1.65 0-1.38 1.12-2.5 2.5-2.5H16c2.21 0 4-1.79 4-4 0-3.86-3.59-7-8-7z"/><circle fill="#f9ab00" cx="6.5" cy="11.5" r="1.5"/><circle fill="#f9ab00" cx="9.5" cy="7.5" r="1.5"/><circle fill="#f9ab00" cx="14.5" cy="7.5" r="1.5"/><circle fill="#f9ab00" cx="17.5" cy="11.5" r="1.5"/></svg>
<div class="t" style="left:849.4px;top:57.5px;font-size:10.8px;color:#1f1f1f;-webkit-text-stroke:0.15px #1f1f1f">Themes</div>
<svg class="a" style="left:990px;top:58px" width="12" height="12" viewBox="0 0 24 24"><path fill="#444746" d="M19 6.41L17.59 5 12 10.59 6.41 5 5 6.41 10.59 12 5 17.59 6.41 19 12 13.41 17.59 19 19 17.59 13.41 12z"/></svg>
<div class="a" style="left:814.2px;top:82.2px;width:200px;height:1px;background:#e3e3e3"></div>
<div class="t" style="left:824px;top:90.5px;font-size:8px;color:#3c4043;-webkit-text-stroke:0.2px #3c4043">In this presentation</div>
<svg class="a" style="left:979.5px;top:89px" width="14" height="14" viewBox="0 0 24 24"><path fill="#1f1f1f" d="M16.59 8.59L12 13.17 7.41 8.59 6 10l6 6 6-6z"/></svg>
<div class="a" style="left:814.2px;top:106px;width:190px;height:1px;background:#e3e3e3"></div>
<div class="a" style="left:1007px;top:84.7px;width:5px;height:36.7px;background:#dadce0;border-radius:3px"></div>
<div class="a" style="left:828.3px;top:120.3px;width:161.7px;height:91.3px;border:1px solid #dadce0;border-radius:2px;background:#fff"></div>
<div class="a" style="left:828.3px;top:154px;width:161.7px;height:16px;line-height:16px;text-align:center;font-size:11.5px;color:#1a1a1a;white-space:nowrap;-webkit-text-stroke:0.2px #1a1a1a">Click to add title</div>
<div class="a" style="left:828.3px;top:172px;width:161.7px;height:8px;line-height:8px;text-align:center;font-size:6px;color:#444;white-space:nowrap">Click to add subtitle</div>
<div class="t" style="left:828.2px;top:220px;font-size:9px;color:#1f1f1f;-webkit-text-stroke:0.2px #1f1f1f">Simple Light</div>
<div class="a" style="left:828.5px;top:240.8px;width:161px;height:89.5px;background:#212121;box-shadow:0 0 0 0.6px #c8c8c8"></div>
<div class="a" style="left:828.5px;top:273.5px;width:161px;height:16px;line-height:16px;text-align:center;font-size:11.5px;color:#e8e8e8;white-space:nowrap">Click to add title</div>
<div class="a" style="left:828.5px;top:291.5px;width:161px;height:8px;line-height:8px;text-align:center;font-size:6px;color:#aaa;white-space:nowrap">Click to add subtitle</div>
<div class="t" style="left:828.2px;top:339.3px;font-size:9px;color:#1f1f1f;-webkit-text-stroke:0.2px #1f1f1f">Simple Dark</div>
<div class="a" style="left:828.5px;top:359.8px;width:161.5px;height:70px;border:1px solid #dadce0;border-radius:2px;background:#fff;overflow:hidden"><div class="a" style="left:0;top:8px;width:161.5px;height:70px;background:#e8eaed"></div><div class="a" style="left:14px;top:20.5px;width:7px;height:1px;background:#2aa198"></div><div class="a" style="left:21px;top:20.5px;width:7px;height:1px;background:#f47b35"></div><div class="t" style="left:14px;top:25.5px;font-size:9.6px;font-weight:700;color:#2b2b2b">Click to add title</div><div class="t" style="left:14px;top:57.5px;font-size:3.5px;color:#777">Click to add subtitle</div></div>
<div class="a" style="left:814.2px;top:425.4px;width:200px;height:52.6px;background:#fff;border-top:1px solid #e3e3e3;border-radius:0 0 9px 9px"></div>
<div class="a" style="left:867.6px;top:439.2px;width:93px;height:26.3px;background:#c2e7ff;border-radius:13px"></div>
<div class="a" style="left:867.6px;top:439.2px;width:93px;height:26.3px;line-height:26.3px;text-align:center;font-size:10px;color:#0b2a4a;white-space:nowrap;-webkit-text-stroke:0.1px #0b2a4a">Import theme</div>
<div class="a" style="left:966.3px;top:441px;width:32px;height:32px;background:#111;border-radius:2px;box-shadow:1px 2px 5px rgba(0,0,0,0.4)"></div>
<svg class="a" style="left:960px;top:440px" width="45" height="35" viewBox="960 440 45 35"><defs><linearGradient id="bbg" x1="0" y1="0" x2="1" y2="1"><stop offset="0" stop-color="#2a2a2a"/><stop offset="0.5" stop-color="#151515"/><stop offset="1" stop-color="#050505"/></linearGradient></defs><rect x="966.3" y="441" width="32" height="32" rx="2" fill="url(#bbg)"/><circle cx="980.90" cy="445.50" r="0.58" fill="#fff" fill-opacity="0.57"/><circle cx="983.70" cy="445.50" r="0.58" fill="#fff" fill-opacity="0.57"/><circle cx="976.70" cy="448.00" r="0.61" fill="#fff" fill-opacity="0.59"/><circle cx="979.50" cy="448.00" r="0.73" fill="#fff" fill-opacity="0.68"/><circle cx="982.30" cy="448.00" r="0.78" fill="#fff" fill-opacity="0.72"/><circle cx="985.10" cy="448.00" r="0.73" fill="#fff" fill-opacity="0.68"/><circle cx="987.90" cy="448.00" r="0.61" fill="#fff" fill-opacity="0.59"/><circle cx="975.30" cy="450.50" r="0.62" fill="#fff" fill-opacity="0.60"/><circle cx="978.10" cy="450.50" r="0.80" fill="#fff" fill-opacity="0.74"/><circle cx="980.90" cy="450.50" r="0.94" fill="#fff" fill-opacity="0.84"/><circle cx="983.70" cy="450.50" r="0.94" fill="#fff" fill-opacity="0.84"/><circle cx="986.50" cy="450.50" r="0.80" fill="#fff" fill-opacity="0.74"/><circle cx="989.30" cy="450.50" r="0.62" fill="#fff" fill-opacity="0.60"/><circle cx="973.90" cy="453.00" r="0.56" fill="#fff" fill-opacity="0.56"/><circle cx="976.70" cy="453.00" r="0.75" fill="#fff" fill-opacity="0.70"/><circle cx="979.50" cy="453.00" r="0.95" fill="#fff" fill-opacity="0.85"/><circle cx="982.30" cy="453.00" r="1.15" fill="#fff" fill-opacity="1.00"/><circle cx="985.10" cy="453.00" r="0.95" fill="#fff" fill-opacity="0.85"/><circle cx="987.90" cy="453.00" r="0.75" fill="#fff" fill-opacity="0.70"/><circle cx="990.70" cy="453.00" r="0.56" fill="#fff" fill-opacity="0.56"/><circle cx="975.30" cy="455.50" r="0.62" fill="#fff" fill-opacity="0.60"/><circle cx="978.10" cy="455.50" r="0.80" fill="#fff" fill-opacity="0.74"/><circle cx="980.90" cy="455.50" r="0.94" fill="#fff" fill-opacity="0.84"/><circle cx="983.70" cy="455.50" r="0.94" fill="#fff" fill-opacity="0.84"/><circle cx="986.50" cy="455.50" r="0.80" fill="#fff" fill-opacity="0.74"/><circle cx="989.30" cy="455.50" r="0.62" fill="#fff" fill-opacity="0.60"/><circle cx="976.70" cy="458.00" r="0.61" fill="#fff" fill-opacity="0.59"/><circle cx="979.50" cy="458.00" r="0.73" fill="#fff" fill-opacity="0.68"/><circle cx="982.30" cy="458.00" r="0.78" fill="#fff" fill-opacity="0.72"/><circle cx="985.10" cy="458.00" r="0.73" fill="#fff" fill-opacity="0.68"/><circle cx="987.90" cy="458.00" r="0.61" fill="#fff" fill-opacity="0.59"/><circle cx="980.90" cy="460.50" r="0.58" fill="#fff" fill-opacity="0.57"/><circle cx="983.70" cy="460.50" r="0.58" fill="#fff" fill-opacity="0.57"/><text x="982.3" y="466.5" font-family="Liberation Sans" font-size="4.6" fill="#aaa" text-anchor="middle" letter-spacing="0.2">BLACKBOX</text></svg>
<div class="a" style="left:1009px;top:456.5px;width:26px;height:26px;border-radius:50%;background:#fff;box-shadow:0 1px 3px rgba(0,0,0,0.3)"></div>
<svg class="a" style="left:1012px;top:463.5px" width="13" height="13" viewBox="0 0 24 24"><path fill="#444746" d="M15.41 7.41L14 6l-6 6 6 6 1.41-1.41L10.83 12z"/></svg>

<!-- edit menu -->
<div class="a" style="left:61.3px;top:40px;width:215.7px;height:256px;background:#fff;border-radius:4px;box-shadow:0 2px 5px rgba(0,0,0,0.22),0 1px 2px rgba(0,0,0,0.12)"></div>
<div class="a" style="left:60px;top:140.8px;width:218.6px;height:24.7px;background:#eff0f2"></div>
<div class="a" style="left:61.3px;top:91.8px;width:215.7px;height:1px;background:#e3e3e3"></div>
<div class="a" style="left:61.3px;top:188.7px;width:215.7px;height:1px;background:#e3e3e3"></div>
<div class="a" style="left:61.3px;top:264.0px;width:215.7px;height:1px;background:#e3e3e3"></div>
<div class="a" style="left:87.5px;top:46.8px;height:16px;line-height:16px;font-size:9.8px;color:#1f1f1f;white-space:nowrap;-webkit-text-stroke:0.12px #1f1f1f">Undo</div>
<div class="a" style="left:166px;top:46.8px;width:100px;height:16px;line-height:16px;font-size:9.8px;color:#5a5e62;text-align:right;white-space:nowrap;-webkit-text-stroke:0.25px #5a5e62">Ctrl+Z</div>
<svg class="a" style="left:69.5px;top:48.3px" width="13" height="13" viewBox="0 0 24 24"><path fill="#444746" d="M7 19v-2h7.1q1.575 0 2.738-1T18 13.5q0-1.5-1.162-2.5T14.1 10H7.8l2.6 2.6L9 14 4 9l5-5 1.4 1.4L7.8 8h6.3q2.425 0 4.163 1.575T20 13.5q0 2.35-1.737 3.925T14.1 19Z"/></svg>
<div class="a" style="left:87.5px;top:68.1px;height:16px;line-height:16px;font-size:9.8px;color:#1f1f1f;white-space:nowrap;-webkit-text-stroke:0.12px #1f1f1f">Redo</div>
<div class="a" style="left:166px;top:68.1px;width:100px;height:16px;line-height:16px;font-size:9.8px;color:#5a5e62;text-align:right;white-space:nowrap;-webkit-text-stroke:0.25px #5a5e62">Ctrl+Y</div>
<svg class="a" style="left:69.5px;top:69.6px" width="13" height="13" viewBox="0 0 24 24"><path fill="#444746" d="M9.9 19q-2.425 0-4.163-1.575T4 13.5q0-2.350 1.737-3.925T9.900 8h6.3l-2.6-2.6L15 4l5 5-5 5-1.4-1.4 2.600-2.6H9.9q-1.575 0-2.737 1T6 13.5q0 1.5 1.163 2.5T9.9 17H17v2Z"/></svg>
<div class="a" style="left:87.5px;top:100.7px;height:16px;line-height:16px;font-size:9.8px;color:#1f1f1f;white-space:nowrap;-webkit-text-stroke:0.12px #1f1f1f">Cut</div>
<div class="a" style="left:166px;top:100.7px;width:100px;height:16px;line-height:16px;font-size:9.8px;color:#5a5e62;text-align:right;white-space:nowrap;-webkit-text-stroke:0.25px #5a5e62">Ctrl+X</div>
<svg class="a" style="left:69.5px;top:102.2px" width="13" height="13" viewBox="0 0 24 24"><path fill="#444746" d="M9.64 7.64c.23-.5.36-1.05.36-1.64 0-2.21-1.79-4-4-4S2 3.79 2 6s1.79 4 4 4c.59 0 1.14-.13 1.64-.36L10 12l-2.36 2.36C7.14 14.13 6.59 14 6 14c-2.21 0-4 1.79-4 4s1.79 4 4 4 4-1.79 4-4c0-.59-.13-1.14-.36-1.64L12 14l7 7h3v-1L9.64 7.64zM6 8c-1.1 0-2-.89-2-2s.9-2 2-2 2 .89 2 2-.9 2-2 2zm0 12c-1.1 0-2-.89-2-2s.9-2 2-2 2 .89 2 2-.9 2-2 2zm6-7.5c-.28 0-.5-.22-.5-.5s.22-.5.5-.5.5.22.5.5-.22.5-.5.5zM19 3l-6 6 2 2 7-7V3z"/></svg>
<div class="a" style="left:87.5px;top:122.0px;height:16px;line-height:16px;font-size:9.8px;color:#1f1f1f;white-space:nowrap;-webkit-text-stroke:0.12px #1f1f1f">Copy</div>
<div class="a" style="left:166px;top:122.0px;width:100px;height:16px;line-height:16px;font-size:9.8px;color:#5a5e62;text-align:right;white-space:nowrap;-webkit-text-stroke:0.25px #5a5e62">Ctrl+C</div>
<svg class="a" style="left:69.5px;top:123.5px" width="13" height="13" viewBox="0 0 24 24"><path fill="#444746" d="M16 1H4c-1.1 0-2 .9-2 2v14h2V3h12V1zm3 4H8c-1.1 0-2 .9-2 2v14c0 1.1.9 2 2 2h11c1.1 0 2-.9 2-2V7c0-1.1-.9-2-2-2zm0 16H8V7h11v14z"/></svg>
<div class="a" style="left:87.5px;top:143.5px;height:16px;line-height:16px;font-size:9.8px;color:#1f1f1f;white-space:nowrap;-webkit-text-stroke:0.12px #1f1f1f">Paste</div>
<div class="a" style="left:166px;top:143.5px;width:100px;height:16px;line-height:16px;font-size:9.8px;color:#5a5e62;text-align:right;white-space:nowrap;-webkit-text-stroke:0.25px #5a5e62">Ctrl+V</div>
<svg class="a" style="left:69.5px;top:145.0px" width="13" height="13" viewBox="0 0 24 24"><path fill="#444746" d="M19 2h-4.18C14.4.84 13.3 0 12 0c-1.3 0-2.4.84-2.82 2H5c-1.1 0-2 .9-2 2v16c0 1.1.9 2 2 2h14c1.1 0 2-.9 2-2V4c0-1.1-.9-2-2-2zm-7 0c.55 0 1 .45 1 1s-.45 1-1 1-1-.45-1-1 .45-1 1-1zm7 18H5V4h2v3h10V4h2v16z"/></svg>
<div class="a" style="left:87.5px;top:164.5px;height:16px;line-height:16px;font-size:9.8px;color:#1f1f1f;white-space:nowrap;-webkit-text-stroke:0.12px #1f1f1f">Paste without formatting</div>
<div class="a" style="left:166px;top:164.5px;width:100px;height:16px;line-height:16px;font-size:9.8px;color:#5a5e62;text-align:right;white-space:nowrap;-webkit-text-stroke:0.25px #5a5e62">Ctrl+Shift+V</div>
<svg class="a" style="left:69.5px;top:166.0px" width="13" height="13" viewBox="0 0 24 24"><path fill="#444746" d="M19 2h-4.18C14.4.84 13.3 0 12 0c-1.3 0-2.4.84-2.82 2H5c-1.1 0-2 .9-2 2v16c0 1.1.9 2 2 2h6v-2H5V4h2v3h10V4h2v6h2V4c0-1.1-.9-2-2-2zm-7 2c-.55 0-1-.45-1-1s.45-1 1-1 1 .45 1 1-.45 1-1 1zM13 12h9v2h-3.5v8h-2v-8H13z"/></svg>
<div class="a" style="left:87.5px;top:197.3px;height:16px;line-height:16px;font-size:9.8px;color:#1f1f1f;white-space:nowrap;-webkit-text-stroke:0.12px #1f1f1f">Select all</div>
<div class="a" style="left:166px;top:197.3px;width:100px;height:16px;line-height:16px;font-size:9.8px;color:#5a5e62;text-align:right;white-space:nowrap;-webkit-text-stroke:0.25px #5a5e62">Ctrl+A</div>
<svg class="a" style="left:69.5px;top:198.8px" width="13" height="13" viewBox="0 0 24 24"><path fill="#444746" d="M3 5h2V3c-1.1 0-2 .9-2 2zm0 8h2v-2H3v2zm4 8h2v-2H7v2zM3 9h2V7H3v2zm10-6h-2v2h2V3zm6 0v2h2c0-1.1-.9-2-2-2zM5 21v-2H3c0 1.1.9 2 2 2zm-2-4h2v-2H3v2zM9 3H7v2h2V3zm2 18h2v-2h-2v2zm8-8h2v-2h-2v2zm0 8c1.1 0 2-.9 2-2h-2v2zm0-12h2V7h-2v2zm0 8h2v-2h-2v2zm-4 4h2v-2h-2v2zm0-16h2V3h-2v2zM7 17h10V7H7v10zm2-8h6v6H9V9z"/></svg>
<div class="a" style="left:87.5px;top:218.5px;height:16px;line-height:16px;font-size:9.8px;color:#1f1f1f;white-space:nowrap;-webkit-text-stroke:0.12px #1f1f1f">Delete</div>
<svg class="a" style="left:69.5px;top:220.0px" width="13" height="13" viewBox="0 0 24 24"><path fill="#444746" d="M6 19c0 1.1.9 2 2 2h8c1.1 0 2-.9 2-2V7H6v12zM8 9h8v10H8V9zm7.5-5l-1-1h-5l-1 1H5v2h14V4z"/></svg>
<div class="a" style="left:87.5px;top:239.8px;height:16px;line-height:16px;font-size:9.8px;color:#1f1f1f;white-space:nowrap;-webkit-text-stroke:0.12px #1f1f1f">Duplicate</div>
<div class="a" style="left:166px;top:239.8px;width:100px;height:16px;line-height:16px;font-size:9.8px;color:#5a5e62;text-align:right;white-space:nowrap;-webkit-text-stroke:0.25px #5a5e62">Ctrl+D</div>
<svg class="a" style="left:69.5px;top:241.3px" width="13" height="13" viewBox="0 0 24 24"><path fill="#444746" d="M16 8h-2v3h-3v2h3v3h2v-3h3v-2h-3zM2 12c0-2.79 1.64-5.2 4.01-6.32V3.52C2.52 4.76 0 8.09 0 12s2.52 7.24 6.01 8.48v-2.16C3.64 17.2 2 14.79 2 12zm13-9c-4.96 0-9 4.040-9 9s4.04 9 9 9 9-4.04 9-9-4.04-9-9-9zm0 16c-3.86 0-7-3.14-7-7s3.14-7 7-7 7 3.14 7 7-3.14 7-7 7z"/></svg>
<div class="a" style="left:87.5px;top:272.6px;height:16px;line-height:16px;font-size:9.8px;color:#1f1f1f;white-space:nowrap;-webkit-text-stroke:0.12px #1f1f1f">Find and replace</div>
<div class="a" style="left:166px;top:272.6px;width:100px;height:16px;line-height:16px;font-size:9.8px;color:#5a5e62;text-align:right;white-space:nowrap;-webkit-text-stroke:0.25px #5a5e62">Ctrl+H</div>
<svg class="a" style="left:69.5px;top:274.1px" width="13" height="13" viewBox="0 0 24 24"><path fill="#444746" d="M11 6c1.38 0 2.63.56 3.54 1.46L12 10h6V4l-2.05 2.05C14.68 4.78 12.93 4 11 4c-3.53 0-6.43 2.61-6.92 6H6.1c.46-2.28 2.48-4 4.9-4zm5.64 9.14c.66-.9 1.12-1.97 1.28-3.14H15.9c-.46 2.28-2.48 4-4.9 4-1.38 0-2.63-.56-3.54-1.46L10 12H4v6l2.05-2.05C7.32 17.22 9.07 18 11 18c1.55 0 2.980-.51 4.14-1.36L20 21.49 21.49 20l-4.85-4.86z"/></svg>
<div class="a" style="left:60px;top:140.2px;width:218.6px;height:25px;border:2px solid #e01b22"></div>
<svg class="a" style="left:170px;top:160px" width="20" height="105" viewBox="170 160 20 105"><path d="M179.7 260V174" stroke="#e01b22" stroke-width="2.3"/><path d="M175 176L179.7 166.5L184.4 176z" fill="#e01b22"/></svg>
<svg class="a" style="left:95px;top:22px" width="120" height="16" viewBox="95 22 120 16"><path d="M109 30H211" stroke="#e01b22" stroke-width="2.5"/><path d="M112 25L100.5 30L112 35z" fill="#e01b22"/></svg>

</div></body></html>
